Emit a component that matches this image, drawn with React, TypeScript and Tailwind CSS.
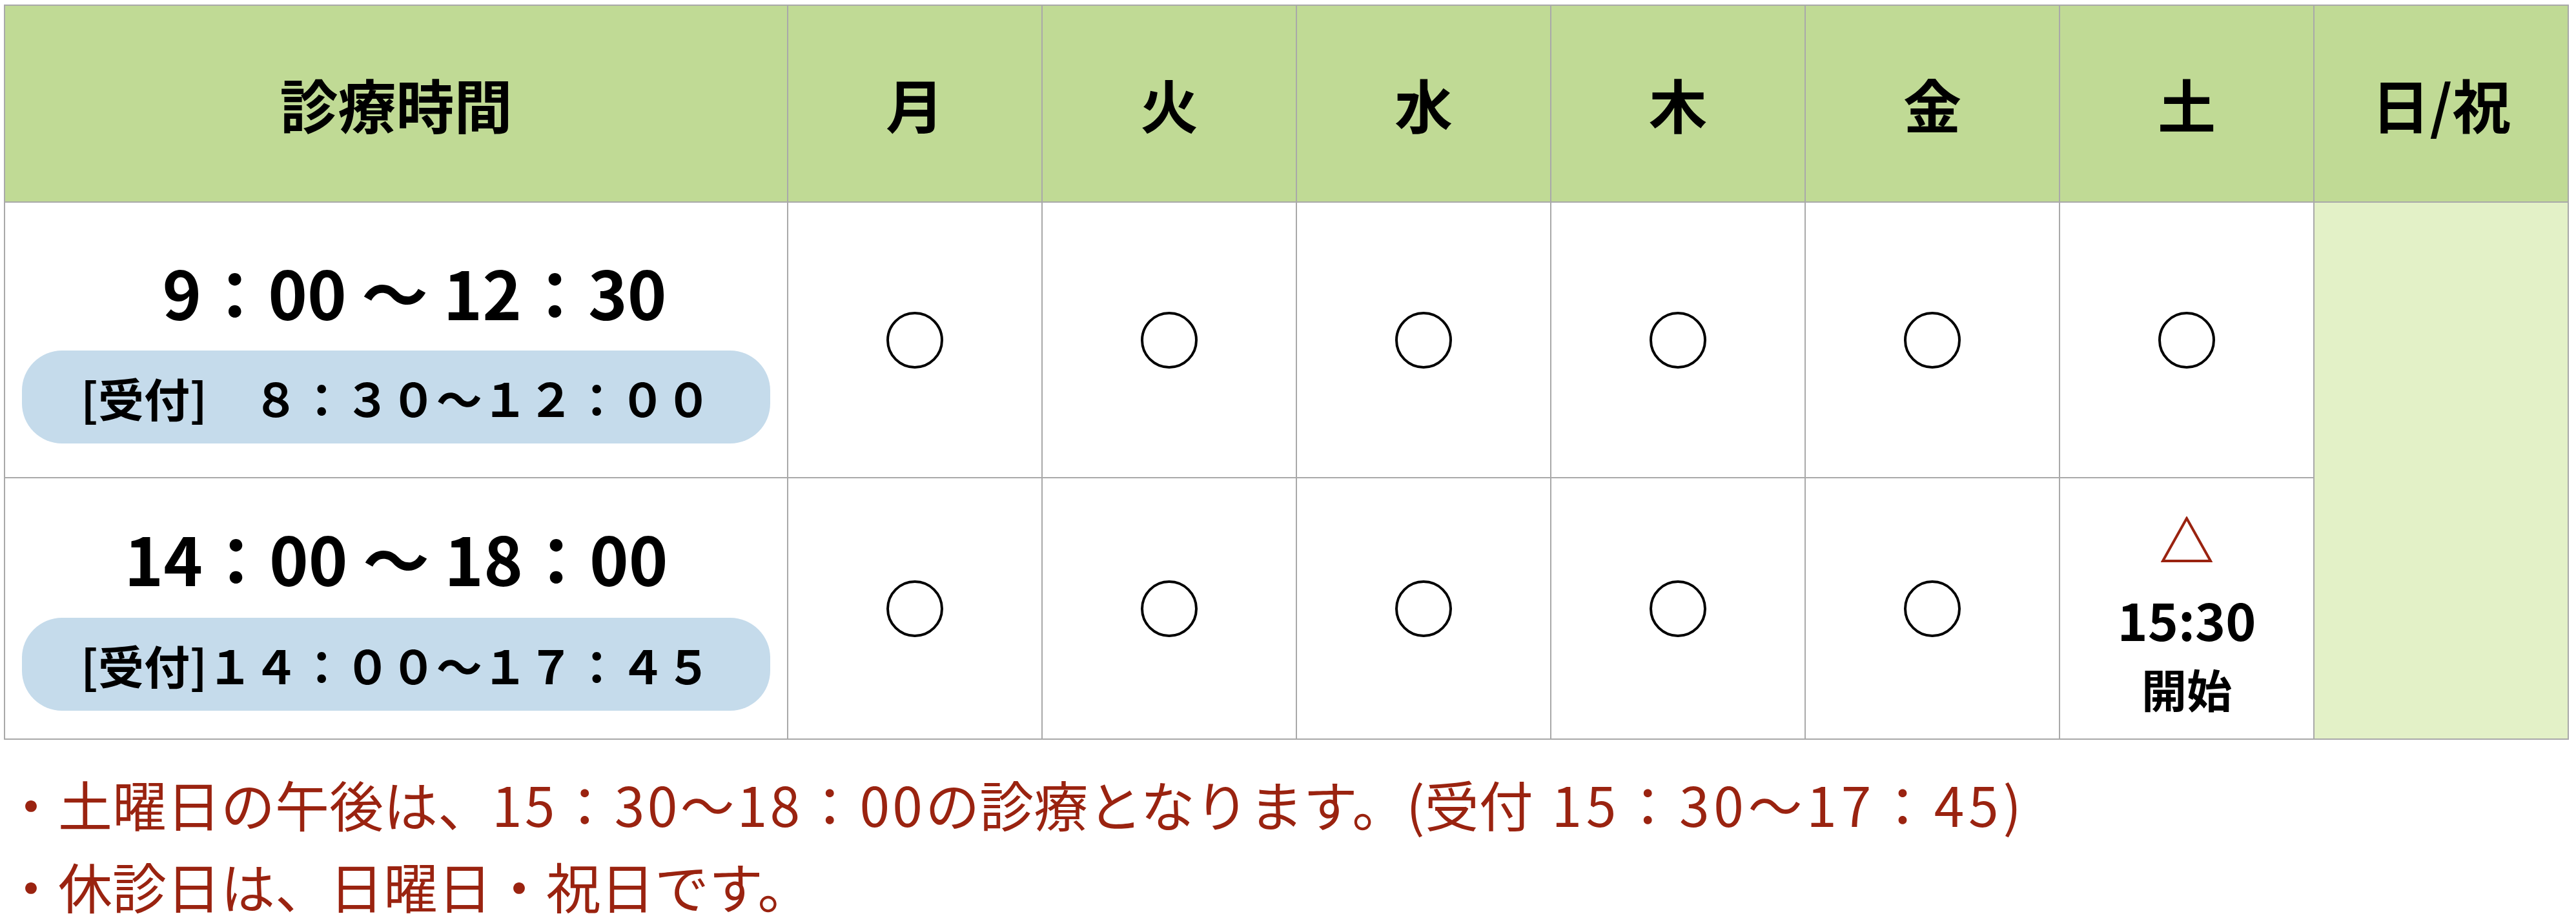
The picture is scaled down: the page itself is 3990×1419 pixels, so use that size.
const days = ['月', '火', '水', '木', '金', '土'];

function Circle() {
  return <div className="h-[88px] w-[88px] rounded-full border-[4px] border-black" />;
}

function Pill({ children }: { children: React.ReactNode }) {
  return (
    <div className="flex h-[144px] w-[1159px] items-center justify-center rounded-[62px] bg-[#c5dbeb] text-[71px] font-bold leading-[1.45]">
      {children}
    </div>
  );
}

export default function App() {
  return (
    <div className="min-h-screen bg-white pl-[6px] pt-[7px] font-['Noto_Sans_CJK_JP',sans-serif] text-black">
      <div className="grid w-[3973px] grid-cols-[1211px_repeat(7,392px)] grid-rows-[303px_425px_403px] gap-[2px] bg-[#a9a9a9] p-[2px]">
        {/* header */}
        <div className="flex items-center justify-center bg-[#c0da95] text-[90px] font-bold leading-[1.45]">診療時間</div>
        {days.map(d => (
          <div key={d} className="flex items-center justify-center bg-[#c0da95] text-[90px] font-bold leading-[1.45]">{d}</div>
        ))}
        <div className="flex items-center justify-center bg-[#c0da95] text-[90px] font-bold leading-[1.45]">日/祝</div>

        {/* morning */}
        <div className="flex flex-col items-center bg-white pt-[63px]">
          <div className="pl-[57px] text-[103px] font-bold leading-[149px]">9：00 ～ 12：30</div>
          <div className="mt-[17px]">
            <Pill>[受付]　８：３０～１２：００</Pill>
          </div>
        </div>
        {days.map(d => (
          <div key={d} className="flex items-center justify-center bg-white">
            <Circle />
          </div>
        ))}
        <div className="row-span-2 bg-[#e3f1c7]" />

        {/* afternoon */}
        <div className="flex flex-col items-center bg-white pt-[48px]">
          <div className="text-[103px] font-bold leading-[149px]">14：00 ～ 18：00</div>
          <div className="mt-[19px]">
            <Pill>[受付]１４：００～１７：４５</Pill>
          </div>
        </div>
        {days.slice(0, 5).map(d => (
          <div key={d} className="flex items-center justify-center bg-white">
            <Circle />
          </div>
        ))}
        <div className="flex flex-col items-center bg-white pt-[59px]">
          <svg width="80" height="72" viewBox="0 0 80 72">
            <polygon points="40,3 77,69 3,69" fill="none" stroke="#9a2310" strokeWidth="4" />
          </svg>
          <div className="mt-[28px] text-[80px] font-bold leading-[116px]">15:30</div>
          <div className="text-[70px] font-bold leading-[101px]">開始</div>
        </div>
      </div>

      <div className="mt-[35px] text-[84px] leading-[127px] text-[#9a2310]">
        <p>
          ・土曜日の午後は、<span className="tracking-[0.05em]">15：30～18：00</span>の診療となります。(受付{' '}
          <span className="ml-[10px] tracking-[0.08em]">15：30～17：45)</span>
        </p>
        <p>・休診日は、日曜日・祝日です。</p>
      </div>
    </div>
  );
}
